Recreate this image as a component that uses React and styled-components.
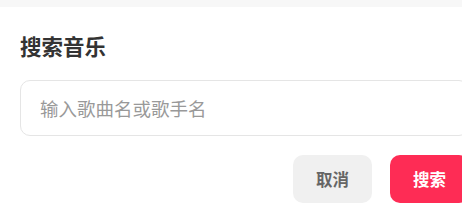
import React, { useState } from 'react'
import styled, { createGlobalStyle } from 'styled-components'

const GlobalStyle = createGlobalStyle`
  * { box-sizing: border-box; }
  html, body {
    margin: 0;
    padding: 0;
    background: #f7f7f7;
    overflow: hidden;
    font-family: 'Noto Sans CJK SC', 'Noto Sans', sans-serif;
  }
`

const Modal = styled.div`
  width: 489px;
  margin-top: 7px;
  padding: 25px 20px 20px;
  background: #fff;
  min-height: 210px;
`

const Title = styled.h2`
  margin: 0 0 20px;
  font-size: 21.5px;
  line-height: 28px;
  font-weight: 700;
  color: #333;
`

const SearchInput = styled.input`
  display: block;
  width: 100%;
  height: 56px;
  padding: 0 19px;
  border: 1px solid #e5e5e5;
  border-radius: 10px;
  font-family: inherit;
  font-size: 18.5px;
  color: #333;
  outline: none;
  background: #fff;

  &::placeholder {
    color: #999;
  }
`

const Actions = styled.div`
  display: flex;
  justify-content: flex-end;
  gap: 18px;
  margin-top: 19px;
`

const Button = styled.button`
  height: 48px;
  padding: 0 23px;
  border: none;
  border-radius: 10px;
  font-family: inherit;
  font-size: 16.5px;
  font-weight: 700;
  cursor: pointer;
  background: ${props => props.primary ? '#fe2c55' : '#f0f0f0'};
  color: ${props => props.primary ? '#fff' : '#666'};
`

export default function App() {
  const [keyword, setKeyword] = useState('')

  return (
    <>
      <GlobalStyle />
      <Modal>
        <Title>搜索音乐</Title>
        <SearchInput
          type="text"
          placeholder="输入歌曲名或歌手名"
          value={keyword}
          onChange={e => setKeyword(e.target.value)}
        />
        <Actions>
          <Button onClick={() => setKeyword('')}>取消</Button>
          <Button primary>搜索</Button>
        </Actions>
      </Modal>
    </>
  )
}
